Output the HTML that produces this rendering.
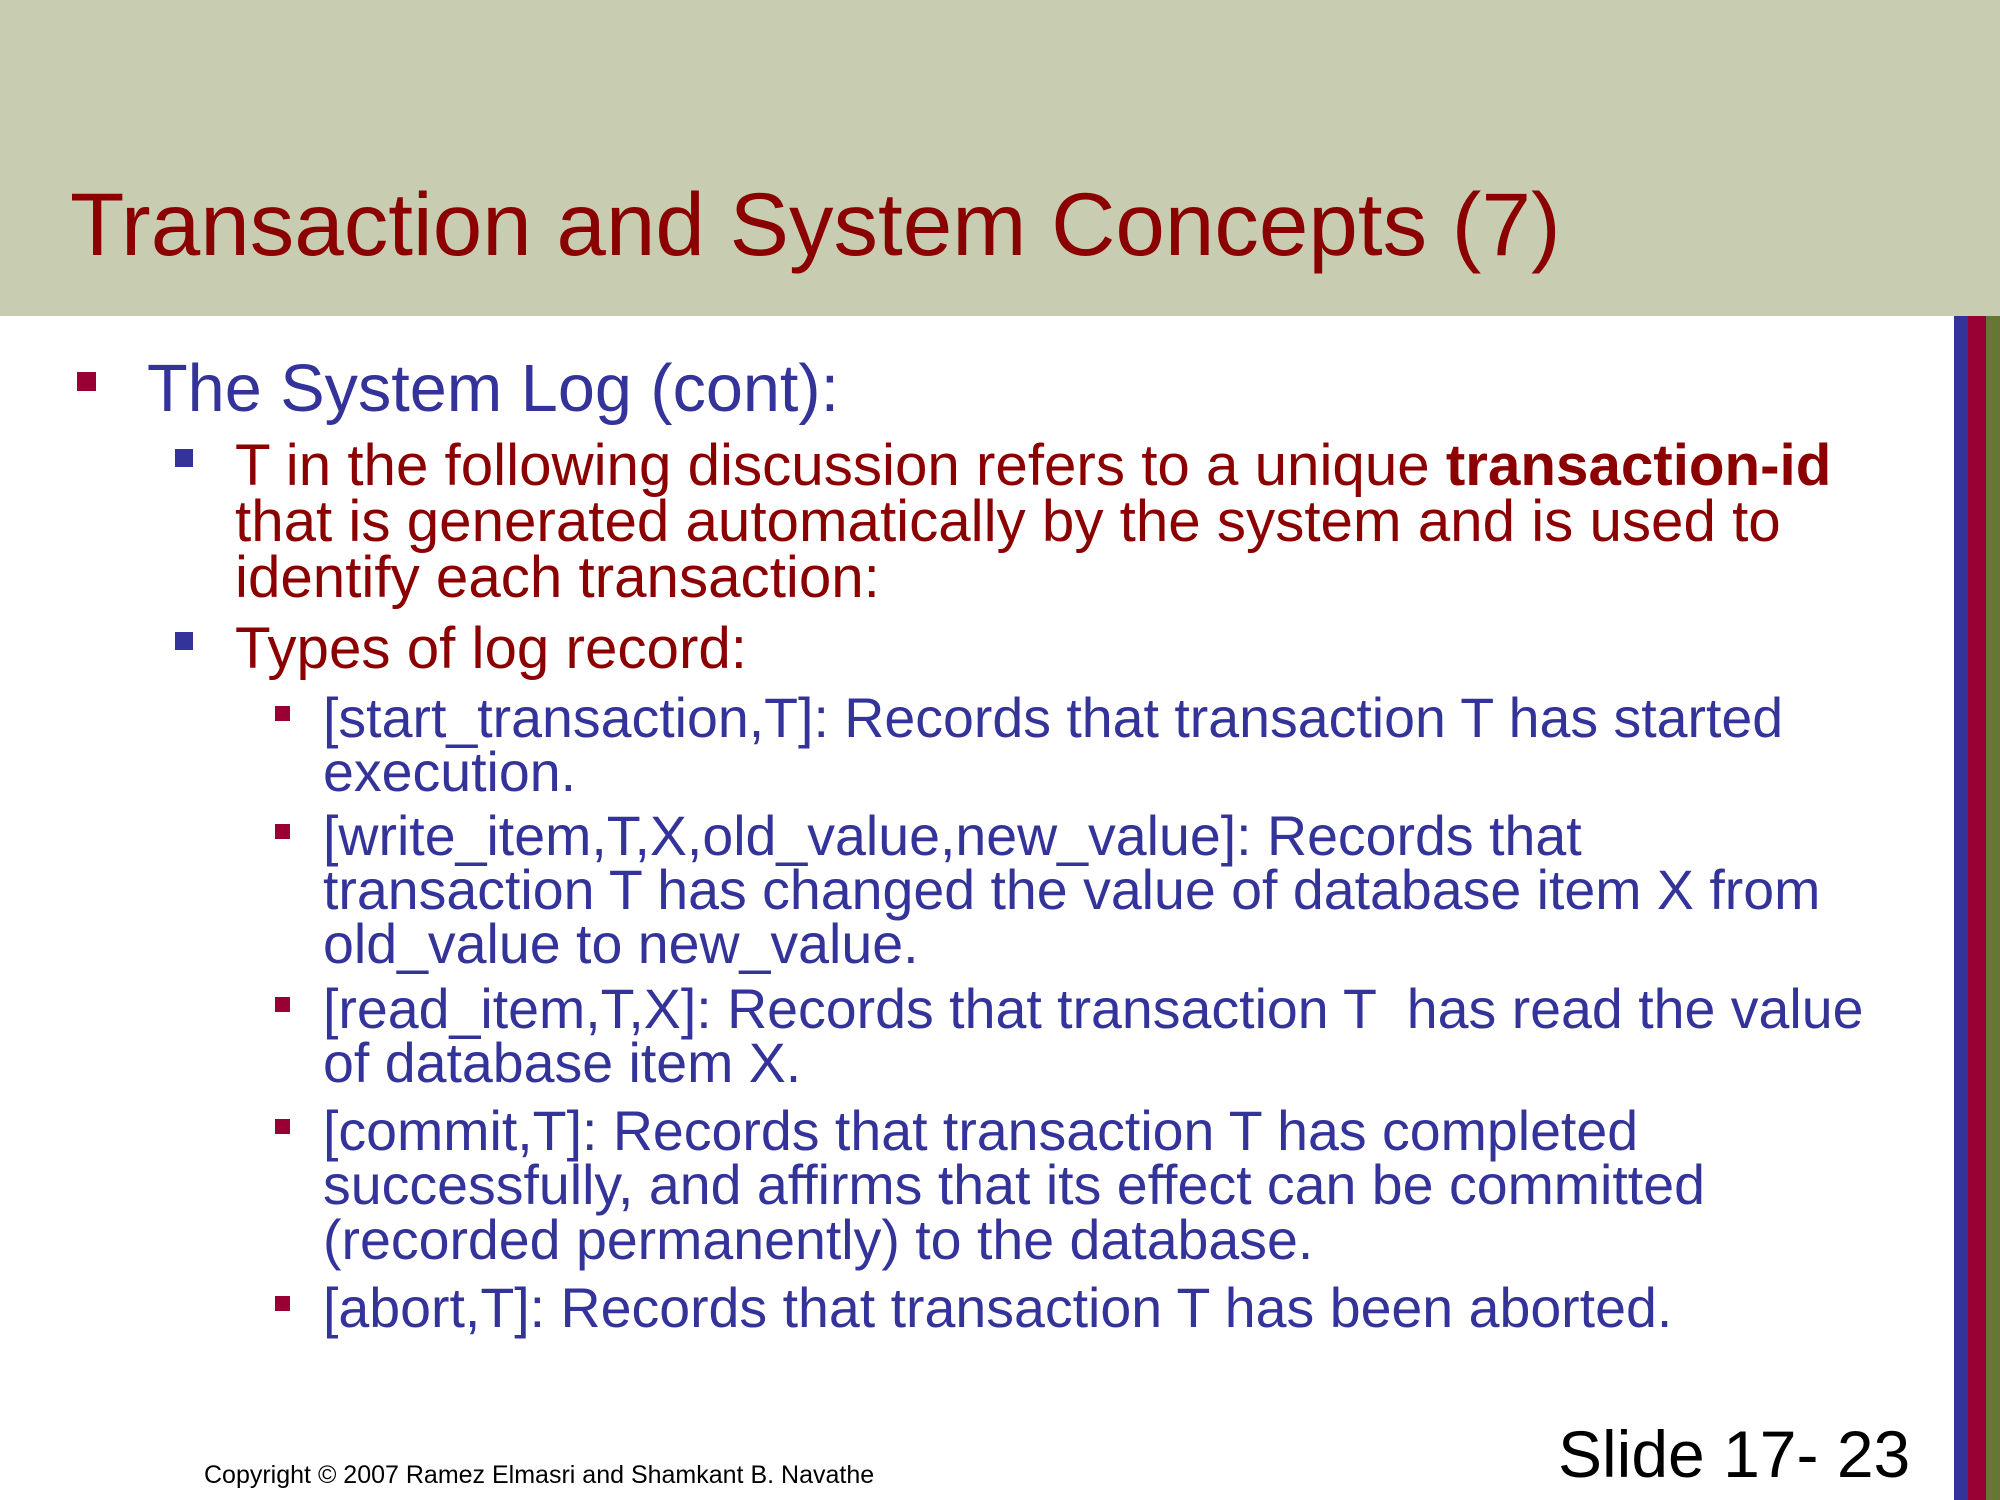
<!DOCTYPE html>
<html><head><meta charset="utf-8"><style>
html,body{margin:0;padding:0;background:#fff}
svg{display:block}
text{font-family:"Liberation Sans",Arial,sans-serif}
</style></head><body>
<svg width="2000" height="1500" viewBox="0 0 2000 1500" xmlns="http://www.w3.org/2000/svg">
<rect x="0" y="0" width="2000" height="316" fill="#c8cdb2"/>
<rect x="1954" y="316" width="14" height="1184" fill="#333399"/>
<rect x="1968" y="316" width="18" height="1184" fill="#990033"/>
<rect x="1986" y="316" width="14" height="1184" fill="#667733"/>
<text x="70" y="255" font-size="89" fill="#8b0000">Transaction and System Concepts (7)</text>

<rect x="77" y="372" width="19" height="19" fill="#990033"/>
<text x="147" y="411" font-size="66.6" fill="#333399">The System Log (cont):</text>

<rect x="175" y="449" width="18" height="18" fill="#333399"/>
<g font-size="58.3" fill="#8b0000">
<text x="235" y="485">T in the following discussion refers to a unique <tspan font-weight="bold">transaction-id</tspan></text>
<text x="235" y="541">that is generated automatically by the system and is used to</text>
<text x="235" y="597">identify each transaction:</text>
<text x="235" y="668">Types of log record:</text>
</g>
<rect x="175" y="632" width="18" height="18" fill="#333399"/>

<g fill="#990033">
<rect x="275" y="706" width="15" height="15"/>
<rect x="275" y="824" width="15" height="15"/>
<rect x="275" y="997" width="15" height="15"/>
<rect x="275" y="1119" width="15" height="15"/>
<rect x="275" y="1296" width="15" height="15"/>
</g>
<g font-size="55.5" fill="#333399">
<text x="323" y="737">[start_transaction,T]: Records that transaction T has started</text>
<text x="323" y="791">execution.</text>
<text x="323" y="855">[write_item,T,X,old_value,new_value]: Records that</text>
<text x="323" y="909">transaction T has changed the value of database item X from</text>
<text x="323" y="963">old_value to new_value.</text>
<text x="323" y="1028" xml:space="preserve">[read_item,T,X]: Records that transaction T  has read the value</text>
<text x="323" y="1082">of database item X.</text>
<text x="323" y="1150">[commit,T]: Records that transaction T has completed</text>
<text x="323" y="1204">successfully, and affirms that its effect can be committed</text>
<text x="323" y="1259">(recorded permanently) to the database.</text>
<text x="323" y="1327">[abort,T]: Records that transaction T has been aborted.</text>
</g>

<text x="204" y="1483" font-size="25" fill="#000">Copyright © 2007 Ramez Elmasri and Shamkant B. Navathe</text>
<text x="1558" y="1477" font-size="66" fill="#000">Slide 17- 23</text>
</svg>
</body></html>
